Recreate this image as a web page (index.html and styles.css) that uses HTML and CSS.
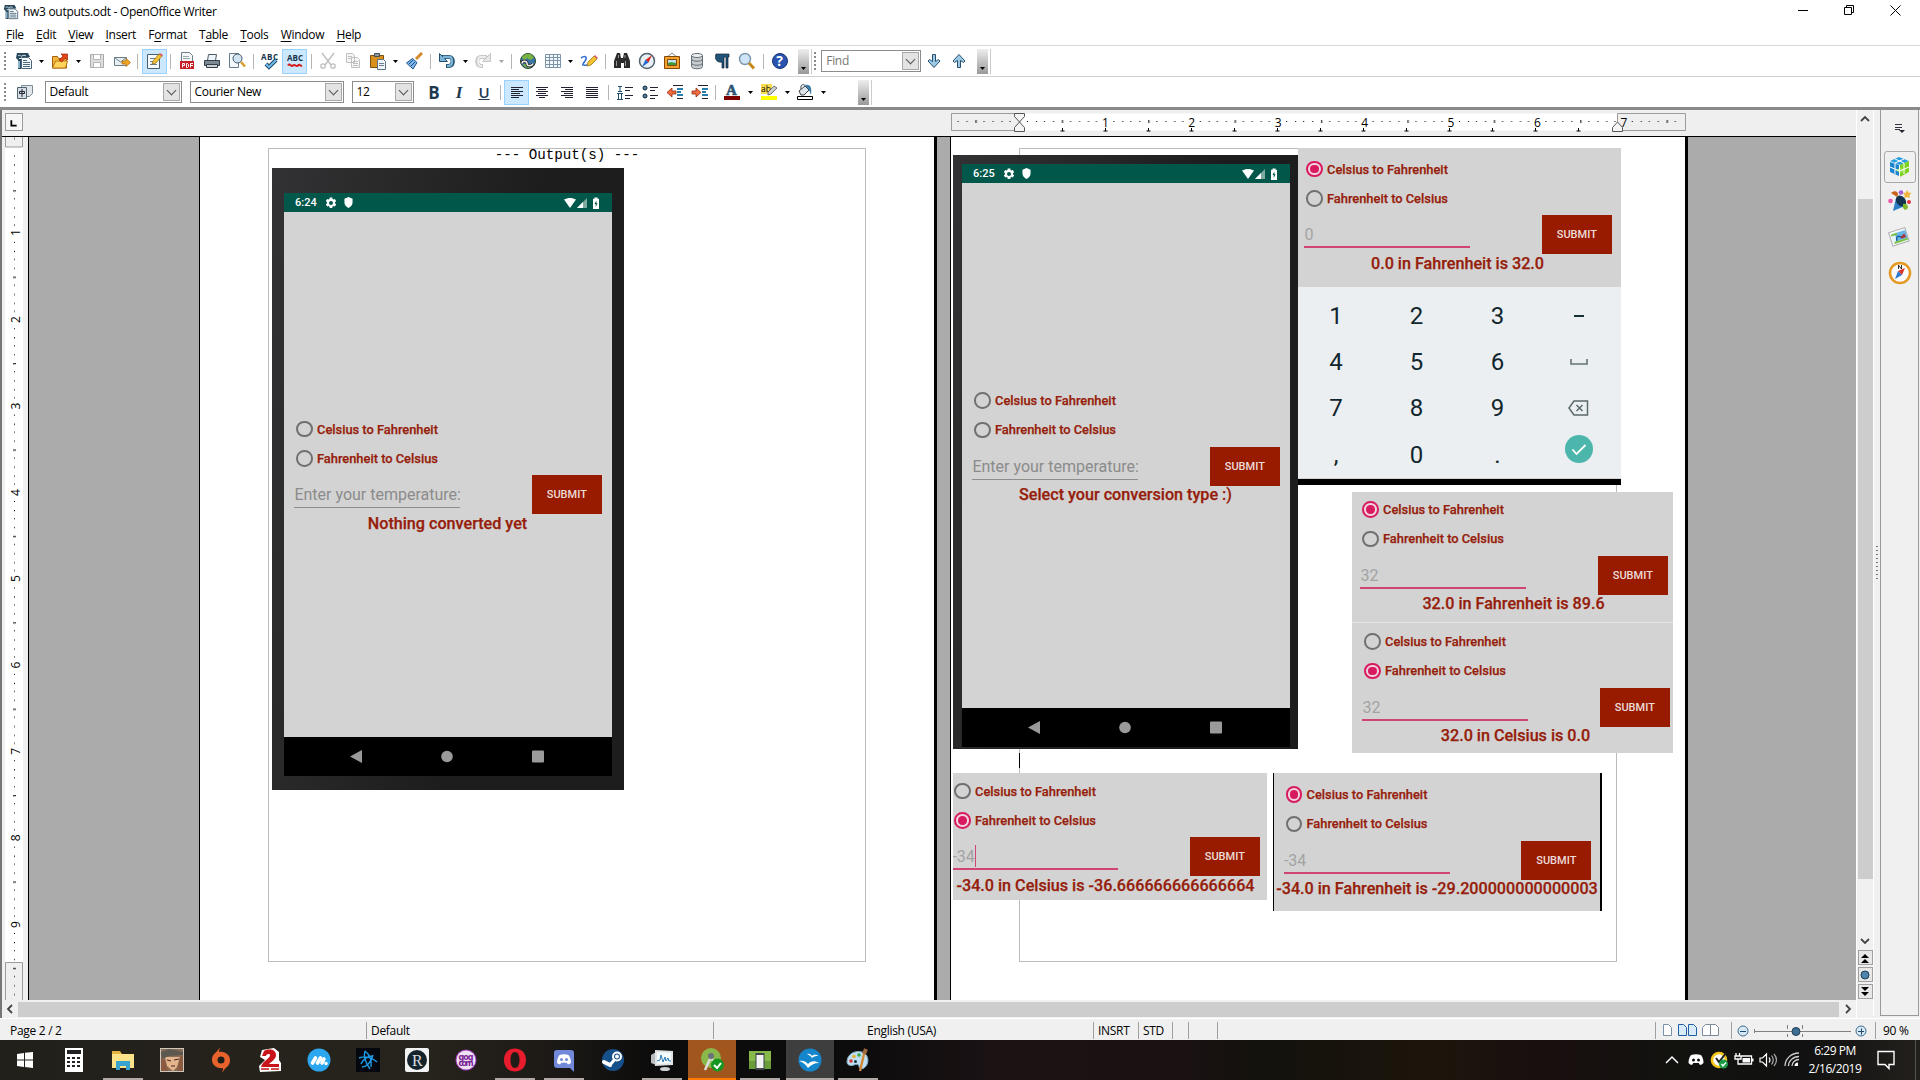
FILE: index.html
```html
<!DOCTYPE html>
<html lang="en">
<head>
<meta charset="utf-8">
<title>hw3 outputs.odt - OpenOffice Writer</title>
<link rel="stylesheet" href="styles.css">
</head>
<body>
<svg class="defs" aria-hidden="true">
  <defs>
    <pattern id="hdots" width="86.4" height="17" patternUnits="userSpaceOnUse" x="68">
      <path d="M8 8h1v1h-1zM17 8h1v1h-1zM25 8h1v1h-1zM34 8h1v1h-1zM43 7h1v3h-1zM51 8h1v1h-1zM60 8h1v1h-1zM69 8h1v1h-1zM77 8h1v1h-1z"/>
    </pattern>
    <pattern id="vdots" width="18" height="86.4" patternUnits="userSpaceOnUse" y="10.5">
      <path d="M9 8h1v1h-1zM9 17h1v1h-1zM9 25h1v1h-1zM9 34h1v1h-1zM8 43h3v1h-3zM9 51h1v1h-1zM9 60h1v1h-1zM9 69h1v1h-1zM9 77h1v1h-1z"/>
    </pattern>
    <symbol id="caret" viewBox="0 0 5 3"><path d="M0 0h5L2.500 3z"/></symbol>
    <symbol id="gear" viewBox="0 0 24 24"><path fill="#fff" fill-rule="evenodd" d="M9.500 1h5l.6 3.200 1.700 1 3-1.100 2.500 4.300-2.400 2.100v2l2.400 2.100-2.500 4.300-3-1.100-1.700 1-.6 3.200h-5l-.6-3.200-1.700-1-3 1.100-2.500-4.300 2.400-2.100v-2L1.700 8.400l2.500-4.300 3 1.100 1.700-1zM12 8a4 4 0 100 8 4 4 0 000-8z"/></symbol>
    <symbol id="shield" viewBox="0 0 10 12"><path fill="#fff" d="M5 0l4.500 1.800V6c0 3-2 5-4.500 6C2.500 11 .5 9 .5 6V1.800z"/></symbol>
    <symbol id="signals" viewBox="0 0 36 12"><path fill="#fff" d="M0 2.500C3.500.4 8.500.4 12 2.500L6 11z"/><path fill="#7faaa1" d="M23 1v10H13z"/><path fill="#fff" d="M19 5v6h-6z"/><path fill="#fff" d="M29 1.800h1.500V.5h3v1.300H35V12h-6z"/><path fill="#01574a" d="M32.400 3.500L30.500 7h1.200v3l1.900-3.700h-1.200z"/></symbol>
    <symbol id="doc" viewBox="0 0 18 18"><path fill="#f4f8fa" stroke="#4d6478" d="M6.500 5.500h7l3 3v8h-10z"/><path fill="#27465a" d="M2 1h11l2 4H6v12H3V8L1 6z"/><path stroke="#d5e6f0" d="M3 4c2-2 3 1 4 0s3-1 4 0M4 6.500h4" fill="none"/><path stroke="#4b6a7e" d="M8 8.500h4M8 10.500h7M8 12.500h7M8 14.500h7"/><path fill="#8fb4cb" d="M3 9h2v7H3z"/></symbol>
  </defs>
</svg>

<header class="titlebar">
  <svg class="app-icon" width="16" height="18"><use href="#doc"/></svg>
  <span class="title ui">hw3 outputs.odt - OpenOffice Writer</span>
  <div class="window-buttons">
    <svg viewBox="0 0 11 11"><path d="M0 5.500h10" stroke="#000"/></svg>
    <svg viewBox="0 0 11 11"><path d="M.5 2.500h7v7h-7zM2.500 2V.5h7v7H8" fill="none" stroke="#000"/></svg>
    <svg viewBox="0 0 11 11"><path d="M.5.5l10 10M10.500.5l-10 10" stroke="#000"/></svg>
  </div>
</header>

<nav class="menubar ui">
  <span><u>F</u>ile</span><span><u>E</u>dit</span><span><u>V</u>iew</span><span><u>I</u>nsert</span><span>F<u>o</u>rmat</span><span>T<u>a</u>ble</span><span><u>T</u>ools</span><span><u>W</u>indow</span><span><u>H</u>elp</span>
</nav>

<div class="toolbar">
  <i class="grip"></i>
  <b class="tool"><svg viewBox="0 0 18 18"><use href="#doc"/></svg></b><b class="drop"><svg><use href="#caret"/></svg></b>
  <b class="tool"><svg viewBox="0 0 18 18"><path fill="#f5b93a" stroke="#a45f10" d="M1.500 16V4.500h5l1 2h8V16z"/><path fill="#ffd45c" stroke="#b87412" d="M1.500 16l3-7h12l-2 7z"/><path fill="#e2461b" stroke="#9b2708" stroke-width=".7" d="M8 8l4-4-2-2h6.500v6l-2-2-4 4z"/></svg></b><b class="drop"><svg><use href="#caret"/></svg></b>
  <b class="tool"><svg viewBox="0 0 18 18"><path fill="#ddd" stroke="#aaa" d="M2.500 2.500h13v13h-13z"/><path fill="#fff" stroke="#b5b5b5" d="M5.500 2.500h7v5h-7zM5.500 10.500h7v5h-7z"/></svg></b>
  <b class="tool"><svg viewBox="0 0 18 18"><path fill="#e9eef2" stroke="#6c7f8d" d="M1.500 5.500h12v8h-12z"/><path fill="none" stroke="#6c7f8d" d="M1.500 5.500l6 4.500 6-4.500"/><path fill="#f5a623" stroke="#b06c08" stroke-width=".8" d="M9 9h4V6.500l4.500 4-4.500 4V12H9z"/></svg></b>
  <i class="sep"></i>
  <b class="tool on"><svg viewBox="0 0 18 18"><path fill="#f7fafc" stroke="#465e70" d="M2.500 2.500h12v14h-12z"/><path stroke="#6a7f8e" d="M5 6.500h6M5 9.500h4M5 12.500h7"/><path fill="#f2c230" stroke="#8d6b17" stroke-width=".7" d="M7 12l1-3 6-7 3 2-6 7z"/><path fill="#e0596d" d="M14 2l1-1 3 2-1 1.500z"/></svg></b>
  <i class="sep"></i>
  <b class="tool"><svg viewBox="0 0 18 18"><path fill="#f4f6f8" stroke="#6f7d88" d="M3.500.5h8l3 3v12h-11z"/><path fill="#c62127" d="M2 9h14v8H2z"/><path stroke="#9aa" d="M5 4.500h6M5 6.500h7"/><path fill="none" stroke="#fff" d="M4.500 15.500v-4h2v2h-2M8.500 11.500v4h1l1-1v-2l-1-1zM12.500 15.500v-4h2.500M12.500 13.500H15"/></svg></b>
  <b class="tool"><svg viewBox="0 0 18 18"><path fill="#eef4f8" stroke="#4a5a66" d="M5.500 2.500h8l-1 6h-8z"/><path fill="#7d8a94" stroke="#333f48" d="M1.500 8.500h15v5h-15z"/><path fill="#c9d1d6" stroke="#333f48" d="M3.500 12.500h11v3h-11z"/></svg></b>
  <b class="tool"><svg viewBox="0 0 18 18"><path fill="#f4f8fa" stroke="#667a88" d="M1.500 1.500h9v14h-9z"/><circle cx="9.500" cy="6.500" r="4.500" fill="#cfe3f0" stroke="#3e5567"/><path stroke="#d99c28" stroke-width="2.500" d="M13 10l4 4.500"/></svg></b>
  <i class="sep"></i>
  <b class="tool"><svg viewBox="0 0 18 18"><text class="abc" x="0" y="8" textLength="17">ABC</text><path fill="none" stroke="#17415e" stroke-width="4" d="M5 12l3 3 7-7"/><path fill="none" stroke="#6fb9ea" stroke-width="2.200" d="M5 12l3 3 7-7"/></svg></b>
  <b class="tool on"><svg viewBox="0 0 18 18"><text class="abc" x="1" y="9" textLength="16">ABC</text><path fill="none" stroke="#d61a1a" stroke-width="2" d="M2 13.500c2-3 3 2 5 0s3 2 5 0 2 1 4 0"/></svg></b>
  <i class="sep"></i>
  <b class="tool"><svg viewBox="0 0 18 18"><g fill="none" stroke="#bdbdbd" stroke-width="1.300"><path d="M3 1l9 12M15 1L6 13"/><circle cx="4" cy="14" r="2.200"/><circle cx="14" cy="14" r="2.200"/></g></svg></b>
  <b class="tool"><svg viewBox="0 0 18 18"><g fill="#f5f5f5" stroke="#c0c0c0"><path d="M2.500 1.500h6l2 2v7h-8zM7.500 5.500h6l2 2v8h-8z"/><path d="M4 4.500h4M4 6.500h3M9 9.500h5M9 11.500h5M9 13.500h5"/></g></svg></b>
  <b class="tool"><svg viewBox="0 0 18 18"><path fill="#d8901f" stroke="#7d4e0d" d="M1.500 3.500h13v12h-13z"/><path fill="#8e9aa3" stroke="#444e55" d="M5.500 1.500h5v3h-5z"/><path fill="#eef4f8" stroke="#5d7180" d="M8.500 7.500h6l2 2v8h-8z"/><path stroke="#6b7f8d" d="M10 11.500h5M10 13.500h5"/></svg></b><b class="drop"><svg><use href="#caret"/></svg></b>
  <b class="tool"><svg viewBox="0 0 18 18"><path stroke="#d4892a" stroke-width="3" d="M11 7l6-6"/><path fill="#7db7e8" stroke="#1e4f90" d="M1.500 11l6-4.500 4.500 4-4 6.500z"/><path stroke="#1e4f90" d="M4 12l4-4M6 14l4-4"/></svg></b>
  <i class="sep"></i>
  <b class="tool"><svg viewBox="0 0 18 18"><path fill="none" stroke="#235170" stroke-width="4.200" d="M4 5h7c5 0 5 8 0 9H8"/><path fill="#7db4d6" stroke="#235170" d="M1.500 1.500v8h8z"/><path fill="none" stroke="#7db4d6" stroke-width="2.400" d="M5 5h6c4 0 4 8 0 9H9"/></svg></b><b class="drop"><svg><use href="#caret"/></svg></b>
  <b class="tool"><svg viewBox="0 0 18 18"><path fill="none" stroke="#c6c6c6" stroke-width="4" d="M13 5H7c-5 0-5 8 0 9h2"/><path fill="#e6e6e6" stroke="#c6c6c6" d="M16.500 1.500v8h-8z"/><path fill="none" stroke="#eee" stroke-width="2" d="M12 5H7c-4 0-4 8 0 9h1"/></svg></b><b class="drop dim"><svg><use href="#caret"/></svg></b>
  <i class="sep"></i>
  <b class="tool"><svg viewBox="0 0 18 18"><circle cx="9" cy="9" r="7.500" fill="#3b74a8" stroke="#264a28"/><path fill="#7bb342" d="M3 5c3-4 6-3 9-3l3 4-4 2-3-2-3 3zM4 12h9l-3 4-4-1z"/><path fill="none" stroke="#222" stroke-width="3" d="M3 11.500c0-3 5-3 5 0s5 3 6 0"/><path fill="none" stroke="#eee" stroke-width="1.500" d="M3 11.500c0-3 5-3 5 0s5 3 6 0"/></svg></b>
  <b class="tool"><svg viewBox="0 0 18 18"><path fill="#f2f7fb" stroke="#7d94a8" d="M1.500 2.500h15v13h-15zM1.500 5.500h15M1.500 8.500h15M1.500 12.500h15M5.500 2.500v13M9.500 2.500v13M13.500 2.500v13"/></svg></b><b class="drop"><svg><use href="#caret"/></svg></b>
  <b class="tool"><svg viewBox="0 0 18 18"><path fill="none" stroke="#3170d0" stroke-width="1.600" d="M1 6c4-3 7-1 4 3s-4 5 3 4"/><path fill="#f2c230" stroke="#8d6b17" stroke-width=".7" d="M7 14l1-4 6-6 3 3-6 6z"/><path fill="#e0596d" d="M14 4l1-1 3 3-1 1z"/></svg></b>
  <i class="sep"></i>
  <b class="tool"><svg viewBox="0 0 18 18"><path fill="#2b2b2b" d="M4 1h3l1 5h2l1-5h3l3 8v7h-6v-5H8v5H1V9z"/><path stroke="#999" d="M3.500 9v5M12.500 9v5M5.500 3v3M12 3v3"/></svg></b>
  <b class="tool"><svg viewBox="0 0 18 18"><circle cx="9" cy="9" r="7.500" fill="#e8f0f6" stroke="#50606c" stroke-width="1.500"/><path fill="#d8261c" d="M14 3l-3.500 7.500L7.500 8z"/><path fill="#2a6ad0" d="M4 15l3.500-7.500 3 3z"/></svg></b>
  <b class="tool"><svg viewBox="0 0 18 18"><path fill="none" stroke="#888" d="M4 5l5-4 5 4"/><path fill="#f1a32c" stroke="#83460b" d="M1.500 4.500h15v12h-15z"/><path fill="#bfe2f5" stroke="#83460b" d="M4.500 7.500h9v6h-9z"/><path fill="#3d9c3a" d="M5 11l3-1 5 1v2H5z"/></svg></b>
  <b class="tool"><svg viewBox="0 0 18 18"><path fill="#c9ced2" stroke="#666f76" d="M3.500 3.500v11c0 3 11 3 11 0v-11"/><ellipse cx="9" cy="3.500" rx="5.500" ry="2" fill="#eef1f3" stroke="#666f76"/><path fill="none" stroke="#666f76" d="M3.500 7c0 3 11 3 11 0M3.500 11c0 3 11 3 11 0"/></svg></b>
  <b class="tool"><svg viewBox="0 0 18 18"><path fill="#1f5478" stroke="#123" stroke-width=".7" d="M3 2h13v3h-1v11h-2V5h-2v11H9v-6C5 11 1 8 3 2z"/></svg></b>
  <b class="tool"><svg viewBox="0 0 18 18"><circle cx="7" cy="7" r="5.500" fill="#cfe5f5" stroke="#7c95ab" stroke-width="1.400"/><path stroke="#c58a1e" stroke-width="3" d="M11 11l5 5.500"/></svg></b>
  <i class="sep"></i>
  <b class="tool"><svg viewBox="0 0 18 18"><circle cx="9" cy="9" r="7.500" fill="#2854b0" stroke="#1a3477"/><text class="qm" x="5.200" y="14">?</text></svg></b>
  <span class="overflow"><svg><use href="#caret"/></svg></span>
  <i class="grip"></i>
  <span class="combo find ui"><em>Find</em><i></i></span>
  <b class="tool"><svg viewBox="0 0 18 18"><path fill="#9cc8e6" stroke="#28506e" d="M7.500 2.500h3v7l3-2 1.500 1.500L9 15.500 3 9l1.500-1.500 3 2z"/></svg></b>
  <b class="tool"><svg viewBox="0 0 18 18"><path fill="#9cc8e6" stroke="#28506e" d="M7.500 15.500h3v-7l3 2L15 9 9 2.500 3 9l1.500 1.500 3-2z"/></svg></b>
  <span class="overflow second"><svg><use href="#caret"/></svg></span>
</div>

<div class="toolbar format">
  <i class="grip"></i>
  <b class="tool"><svg viewBox="0 0 18 18"><path fill="#dfe6eb" stroke="#7b8c98" d="M5.500 2.500h11v8l-3 3h-8z"/><path fill="#d5dee4" stroke="#52656f" d="M1.500 4.500h9v11h-9z"/><path fill="none" stroke="#223" d="M3.500 8.500h5v2h-5zM6 6v8"/></svg></b>
  <span class="combo style ui"><em>Default</em><i></i></span>
  <span class="combo face ui"><em>Courier New</em><i></i></span>
  <span class="combo size ui"><em>12</em><i></i></span>
  <b class="tool glyph bold">B</b><b class="tool glyph italic">I</b><b class="tool glyph under">U</b>
  <i class="sep"></i>
  <b class="tool on"><svg viewBox="0 0 18 18"><path stroke="#223" d="M3 4.500h12M3 6.500h8M3 8.500h12M3 10.500h9M3 12.500h12M3 14.500h8"/></svg></b>
  <b class="tool"><svg viewBox="0 0 18 18"><path stroke="#223" d="M3 4.500h12M5 6.500h8M3 8.500h12M5 10.500h8M3 12.500h12M6 14.500h6"/></svg></b>
  <b class="tool"><svg viewBox="0 0 18 18"><path stroke="#223" d="M3 4.500h12M7 6.500h8M3 8.500h12M6 10.500h9M3 12.500h12M7 14.500h8"/></svg></b>
  <b class="tool"><svg viewBox="0 0 18 18"><path stroke="#223" d="M3 4.500h12M3 6.500h12M3 8.500h12M3 10.500h12M3 12.500h12M3 14.500h12"/></svg></b>
  <i class="sep"></i>
  <b class="tool"><svg viewBox="0 0 18 18"><path stroke="#234f6d" d="M2 3.500h4M4 3v5M2 8.500h4M1 10.500h6M2.500 11v5M5.500 11v5M1 16.500h6"/><path stroke="#223" d="M9 4.500h8M9 7.500h5M9 12.500h8M9 15.500h5"/></svg></b>
  <b class="tool"><svg viewBox="0 0 18 18"><circle cx="4" cy="5" r="2" fill="#4d81a6" stroke="#123"/><circle cx="4" cy="13" r="2" fill="#4d81a6" stroke="#123"/><path stroke="#223" d="M9 4.500h8M9 7.500h5M9 12.500h8M9 15.500h5"/></svg></b>
  <b class="tool"><svg viewBox="0 0 18 18"><path fill="#ef6a3c" stroke="#952c10" stroke-width=".8" d="M1 9.500L6 5v3h4v3H6v3z"/><path stroke="#223" d="M7 2.500h10M11 15.500h6"/><path stroke="#2d7dab" stroke-width="2" d="M11 6h6M11 9h4M11 12h6"/></svg></b>
  <b class="tool"><svg viewBox="0 0 18 18"><path fill="#ef6a3c" stroke="#952c10" stroke-width=".8" d="M10 9.500L5 5v3H1v3h4v3z"/><path stroke="#223" d="M7 2.500h10M11 15.500h6"/><path stroke="#2d7dab" stroke-width="2" d="M11 6h6M11 9h4M11 12h6"/></svg></b>
  <i class="sep"></i>
  <b class="tool"><svg viewBox="0 0 18 18"><text class="fonta" x="3" y="12">A</text><path fill="#7e0000" d="M1 13h16v4H1z"/></svg></b><b class="drop"><svg><use href="#caret"/></svg></b>
  <b class="tool"><svg viewBox="0 0 18 18"><path fill="#f8dc52" d="M1 1h11v10H1z"/><text class="ab" x="1" y="9">ab</text><path fill="#c9ccd0" stroke="#555" stroke-width=".8" d="M8 12V9l6-6 3 2-6 6z"/><path fill="#ff0" d="M1 13h16v4H1z"/></svg></b><b class="drop"><svg><use href="#caret"/></svg></b>
  <b class="tool"><svg viewBox="0 0 18 18"><path fill="#dfe5e9" stroke="#333f48" d="M3 8l6-5 4 4-5 5H5z"/><path fill="none" stroke="#333f48" d="M5 6c-1-6 4-5 5-2"/><path fill="#3d7ba8" d="M9 2c6-1 7 3 6 10l-2-5z"/><path fill="#fff" stroke="#000" d="M1.500 13.500h15v3h-15z"/></svg></b><b class="drop"><svg><use href="#caret"/></svg></b>
  <span class="overflow"><svg><use href="#caret"/></svg></span>
</div>

<main class="workspace">
  <section class="editor">
    <div class="hruler-row">
      <span class="tab-kind"><svg viewBox="0 0 18 18"><path d="M6 7v6h6" fill="none" stroke="#000" stroke-width="2"/></svg></span>
      <svg class="hruler" width="735" height="20" viewBox="0 0 735 20">
        <path fill="#fff" d="M68 .5h598v17H68z"/>
        <path fill="#efefef" stroke="#9b9b9b" d="M.5.5h68v17H.5zM666.500.5h68v17h-68z"/>
        <path fill="url(#hdots)" d="M4 0h728v17H4z"/>
        <g class="ruler-num"><text x="154.400" y="13.500">1</text><text x="240.800" y="13.500">2</text><text x="327.200" y="13.500">3</text><text x="413.600" y="13.500">4</text><text x="500" y="13.500">5</text><text x="586.400" y="13.500">6</text><text x="673" y="13.500">7</text></g>
        <path stroke="#000" fill="none" d="M109.500 18h4M111.500 15v3M152.500 18h4M154.500 15v3M195.500 18h4M197.500 15v3M238.500 18h4M240.500 15v3M281.500 18h4M283.500 15v3M324.500 18h4M326.500 15v3M367.500 18h4M369.500 15v3M410.500 18h4M412.500 15v3M453.500 18h4M455.500 15v3M496.500 18h4M498.500 15v3M539.500 18h4M541.500 15v3M582.500 18h4M584.500 15v3M625.500 18h4M627.500 15v3"/>
        <path fill="#f4f4f4" stroke="#555" d="M63.500.5h10v3l-5 5.500-5-5.500zM63.500 18.500v-4l5-5.500 5 5.500v4zM661.500 18.500v-4l5-5.500 5 5.500v4z"/>
      </svg>
    </div>
    <div class="doc-row">
      <svg class="vruler" width="19" height="864" viewBox="0 0 19 864">
        <path fill="#fff" d="M0 10h18v815H0z"/>
        <path fill="#efefef" stroke="#9b9b9b" d="M.5-1v11h17V-1M.5 865V825.500h17V865"/>
        <path fill="url(#vdots)" d="M0 0h18v864H0z"/>
        <g class="ruler-num"><text transform="translate(15 95.500) rotate(-90)">1</text><text transform="translate(15 182.500) rotate(-90)">2</text><text transform="translate(15 269) rotate(-90)">3</text><text transform="translate(15 355.500) rotate(-90)">4</text><text transform="translate(15 441.500) rotate(-90)">5</text><text transform="translate(15 528) rotate(-90)">6</text><text transform="translate(15 614.300) rotate(-90)">7</text><text transform="translate(15 700.700) rotate(-90)">8</text><text transform="translate(15 787.500) rotate(-90)">9</text></g>
      </svg>
      <div class="canvas">
        <article class="page">
          <div class="bounds"><p class="heading">--- Output(s) ---</p></div>
          <figure class="shot phone shot-a">
            <div class="screen">
              <div class="statusbar"><span class="time">6:24</span><svg class="g"><use href="#gear"/></svg><svg class="s"><use href="#shield"/></svg><svg class="sig"><use href="#signals"/></svg></div>
              <div class="form">
                <label class="opt"><i></i><span>Celsius to Fahrenheit</span></label>
                <label class="opt"><i></i><span>Fahrenheit to Celsius</span></label>
                <div class="entry"><span class="field hint">Enter your temperature:</span><button>SUBMIT</button></div>
                <p class="result">Nothing converted yet</p>
              </div>
              <div class="navbar"><svg viewBox="0 0 12 13"><path d="M12 0v13L0 6.500z"/></svg><svg viewBox="0 0 12 12"><circle cx="6" cy="6" r="5.800"/></svg><svg viewBox="0 0 12 12"><rect width="12" height="12" rx="1"/></svg></div>
            </div>
          </figure>
        </article>
        <article class="page">
          <div class="bounds"><i class="text-caret"></i></div>
          <figure class="shot phone shot-b">
            <div class="screen">
              <div class="statusbar"><span class="time">6:25</span><svg class="g"><use href="#gear"/></svg><svg class="s"><use href="#shield"/></svg><svg class="sig"><use href="#signals"/></svg></div>
              <div class="form">
                <label class="opt"><i></i><span>Celsius to Fahrenheit</span></label>
                <label class="opt"><i></i><span>Fahrenheit to Celsius</span></label>
                <div class="entry"><span class="field hint">Enter your temperature:</span><button>SUBMIT</button></div>
                <p class="result">Select your conversion type :)</p>
              </div>
              <div class="navbar"><svg viewBox="0 0 12 13"><path d="M12 0v13L0 6.500z"/></svg><svg viewBox="0 0 12 12"><circle cx="6" cy="6" r="5.800"/></svg><svg viewBox="0 0 12 12"><rect width="12" height="12" rx="1"/></svg></div>
            </div>
          </figure>
          <figure class="shot shot-c">
            <div class="form">
              <label class="opt sel"><i></i><span>Celsius to Fahrenheit</span></label>
              <label class="opt"><i></i><span>Fahrenheit to Celsius</span></label>
              <div class="entry"><span class="field">0</span><button>SUBMIT</button></div>
              <p class="result">0.0 in Fahrenheit is 32.0</p>
            </div>
            <div class="keypad">
              <span>1</span><span>2</span><span>3</span><span><svg width="10" height="2"><path fill="#163038" d="M0 0h10v2H0z"/></svg></span>
              <span>4</span><span>5</span><span>6</span><span><svg width="18" height="6"><path fill="none" stroke="#667378" stroke-width="1.600" d="M1 0v5h16V0"/></svg></span>
              <span>7</span><span>8</span><span>9</span><span><svg width="21" height="16"><path fill="none" stroke="#5b686d" stroke-width="1.500" d="M6 1h13.500v14H6L1 8zM8.500 5l6 6M14.500 5l-6 6"/></svg></span>
              <span>,</span><span>0</span><span>.</span><span><svg class="ok" width="28" height="28"><circle cx="14" cy="14" r="14" fill="#4db6ac"/><path fill="none" stroke="#fff" stroke-width="1.800" d="M7.500 14.500l4 4.500 9-9"/></svg></span>
            </div>
          </figure>
          <figure class="shot shot-d">
            <div class="form">
              <label class="opt sel"><i></i><span>Celsius to Fahrenheit</span></label>
              <label class="opt"><i></i><span>Fahrenheit to Celsius</span></label>
              <div class="entry"><span class="field">32</span><button>SUBMIT</button></div>
              <p class="result">32.0 in Fahrenheit is 89.6</p>
            </div>
          </figure>
          <figure class="shot shot-e">
            <div class="form">
              <label class="opt"><i></i><span>Celsius to Fahrenheit</span></label>
              <label class="opt sel"><i></i><span>Fahrenheit to Celsius</span></label>
              <div class="entry"><span class="field">32</span><button>SUBMIT</button></div>
              <p class="result">32.0 in Celsius is 0.0</p>
            </div>
          </figure>
          <figure class="shot shot-f">
            <div class="form">
              <label class="opt"><i></i><span>Celsius to Fahrenheit</span></label>
              <label class="opt sel"><i></i><span>Fahrenheit to Celsius</span></label>
              <div class="entry"><span class="field"><span class="typed">-34</span></span><button>SUBMIT</button></div>
              <p class="result">-34.0 in Celsius is -36.666666666666664</p>
            </div>
          </figure>
          <figure class="shot shot-g">
            <div class="form">
              <label class="opt sel"><i></i><span>Celsius to Fahrenheit</span></label>
              <label class="opt"><i></i><span>Fahrenheit to Celsius</span></label>
              <div class="entry"><span class="field">-34</span><button>SUBMIT</button></div>
              <p class="result">-34.0 in Fahrenheit is -29.200000000000003</p>
            </div>
          </figure>
        </article>
      </div>
    </div>
    <div class="hscroll"><svg viewBox="0 0 8 10"><path d="M6 1L2 5l4 4"/></svg><i></i><svg viewBox="0 0 8 10"><path d="M2 1l4 4-4 4"/></svg></div>
  </section>
  <div class="vscroll">
    <svg class="arrow" viewBox="0 0 10 8"><path d="M1 6l4-4 4 4"/></svg>
    <div class="track"><i></i></div>
    <svg class="arrow" viewBox="0 0 10 8"><path d="M1 2l4 4 4-4"/></svg>
    <b><svg viewBox="0 0 10 10"><path d="M1 5l4-4 4 4zM1 10l4-4 4 4z"/></svg></b>
    <b><svg viewBox="0 0 10 10"><circle cx="5" cy="5" r="4" fill="#4f86ad" stroke="#1b3c55"/></svg></b>
    <b><svg viewBox="0 0 10 10"><path d="M1 0l4 4 4-4zM1 5l4 4 4-4z"/></svg></b>
  </div>
  <div class="splitter"><i></i></div>
  <aside class="sidebar">
    <svg class="deck-menu" width="10" height="10"><path stroke="#334" d="M0 .5h7M0 3.500h7M0 5.500h5"/><path d="M4 6h6L7 9z" fill="#223"/></svg>
    <b class="deck active"><svg viewBox="0 0 24 24"><path fill="#2a9fe0" d="M2 6l9-4 10 4-9 4z"/><path fill="#1b86cf" d="M2 7l9 3v11l-9-4z"/><path fill="#7ed321" d="M12 10l9-4v11l-9 5z"/><path fill="#9be04a" d="M7 15l6-2 5 2-5 3z"/><path stroke="#fff" fill="none" d="M2 12l9.500 4 9.500-4M7 4l9 4v11M16 4L7 8v11M11.500 10v12"/></svg></b>
    <b class="deck"><svg viewBox="0 0 24 24"><path fill="#2c7fc4" d="M5 21l3-13 9 8z"/><ellipse cx="13" cy="11" rx="4.500" ry="6" transform="rotate(-40 13 11)" fill="#12344f"/><path fill="#c8651b" d="M3 3c4-4 9-1 6 4L6 5z"/><path fill="#7db928" d="M15 14c5-2 7 5 2 6l-2-2z"/><circle cx="13" cy="2.500" r="2.300" fill="#a45fd6"/><path fill="#f2b53c" d="M19 0l1.500 2.500 3 .5-2 2.300.3 3L19 7l-2.500 1.300V5L15 3l3-.5z"/><circle cx="2.500" cy="11" r="2.300" fill="#ea5aa8"/><circle cx="21" cy="12" r="2" fill="#e0353c"/></svg></b>
    <b class="deck"><svg viewBox="0 0 24 24"><g transform="rotate(-18 12 12)"><path fill="#fff" stroke="#aaa" d="M2.500 4.500h17v14h-17z"/><path fill="#e3f3fc" d="M4 6h14v11H4z"/><path fill="#67b3e6" d="M8 7h11v8H8z"/><path fill="#7cc142" d="M4 7h6v2H4zM5 15h14v2H5z"/><path fill="none" stroke="#1b5f9e" stroke-width="1.500" d="M8 15c0-6 4-5 6-1"/><path fill="#a33" d="M13 12l4-2 1 4h-5z"/></g></svg></b>
    <b class="deck"><svg viewBox="0 0 24 24"><circle cx="12" cy="12" r="10" fill="#fbfbfb" stroke="#e49a24" stroke-width="2.600"/><path fill="#d9342b" d="M17 7l-3 7-4-4z"/><path fill="#3079cf" d="M7 18l3-8 4 4z"/><path fill="none" stroke="#333" d="M10.500 8V4l3 4V4"/></svg></b>
  </aside>
</main>

<footer class="status ui">
  <span class="c-page"><em>Page 2 / 2</em></span><span class="c-style"><em>Default</em></span><span class="c-lang"><em>English (USA)</em></span><span class="c-ins"><em>INSRT</em></span><span class="c-std"><em>STD</em></span><span class="c-a"></span><span class="c-b"></span><span class="c-rest"></span>
  <span class="c-views">
    <svg width="10" height="13"><path fill="#fff" stroke="#7a93aa" d="M.5.5h5l3 3v8h-8z"/></svg>
    <svg width="19" height="13"><path fill="#d9eafa" stroke="#1f5fa8" d="M.5.5h5l3 3v8h-8zM10.500.5h5l3 3v8h-8z"/></svg>
    <svg width="18" height="13"><path fill="#fff" stroke="#7a8a98" d="M3.500.5h5v11h-8v-8zM8.500.5h5l3 3v8h-8z"/></svg>
  </span>
  <span class="c-zoom"><svg width="130" height="16"><circle cx="11" cy="8" r="5" fill="#d6e8f5" stroke="#3f6d90"/><path stroke="#1d4a6d" d="M8 8.500h6"/><path stroke="#808080" d="M22.500 6v4M22 8.500h97M55.500 2v4M70.500 2v4M55.500 11v3M70.500 11v3"/><circle cx="64" cy="8.500" r="4" fill="#3d6d91" stroke="#1f3d55"/><circle cx="129" cy="8" r="5" fill="#d6e8f5" stroke="#3f6d90"/><path stroke="#1d4a6d" d="M126 8.500h6M129.500 5.500v6"/></svg></span>
  <span class="c-pct"><em>90 %</em></span>
</footer>

<div class="taskbar">
  <b><svg viewBox="0 0 24 24"><path fill="#fff" d="M4 6l7-1v6.500H4zM12 4.800L20 4v7.500h-8zM4 12.500h7V19l-7-1zM12 12.500h8V20l-8-1z"/></svg></b>
  <b><svg viewBox="0 0 24 24"><path fill="#fff" d="M3 0h18v24H3z"/><path fill="#222" d="M5 2h14v4H5zM5 9h3v2H5zM10 9h3v2h-3zM15 9h3v2h-3zM5 13h3v2H5zM10 13h3v2h-3zM15 13h3v2h-3zM5 17h3v2H5zM10 17h3v2h-3zM15 17h3v2h-3z"/></svg></b>
  <b class="run wide"><svg viewBox="0 0 24 24"><path fill="#e3b341" d="M1 3h8l2 3h12v14H1z"/><path fill="#fce38a" d="M1 6h22v14H1z"/><path fill="#38a3cf" d="M5 13h14v9h-4v-4H9v4H5z"/></svg></b>
  <b><svg viewBox="0 0 24 24"><path fill="#cfc7bd" d="M0 0h24v24H0z"/><path fill="#8a6d55" d="M1 1h22v22H1z"/><path fill="#e4b58c" d="M5 9h15l-3 10-4 4-6-5z"/><path fill="#5d5850" d="M1 4l8-3 6 1 8 2v3L9 8 2 11z"/><path fill="#8b5a40" d="M1 11l4 1 3 11H1zM20 9l3-1v15h-6z"/><path stroke="#422" d="M7 12l4 1M14 12l5-1M11 18h4"/></svg></b>
  <b><svg viewBox="0 0 24 24"><path fill="#e8622c" d="M11 0c-1 2-1 3-1 4 6-1 11 3 11 8 0 6-4 7-6 10-1 1-1 2-2 2 1-2 1-3 1-4-6 1-11-3-11-8 0-6 4-7 6-10 1-1 1-2 2-2z"/><circle cx="12" cy="12" r="3.500" fill="#1d1d18"/></svg></b>
  <b><svg viewBox="0 0 24 24"><path fill="#fff" d="M4 2l12-2 5 4v8l2 3v8L2 24l-1-6 6-6-5-3z"/><path fill="#c8141b" d="M6 3c6-3 12-1 12 4 0 4-4 6-7 9h10v3H3c2-7 9-8 9-12 0-2-4-1-4 1H4z"/><path stroke="#c8141b" stroke-width="1.500" d="M3 21h8M13 21h8"/></svg></b>
  <b><svg viewBox="0 0 24 24"><circle cx="12" cy="12" r="11.500" fill="#2aa7ee"/><path fill="none" stroke="#fff" stroke-width="3.600" stroke-linecap="round" d="M5.500 15l3-5M10.500 15l3-5M15 15l2-4M19 15.500v0"/></svg></b>
  <b><svg viewBox="0 0 24 24"><path fill="#04080e" d="M0 0h24v24H0z"/><g fill="none" stroke="#1e9be8" stroke-width="1.400"><path d="M9 3c4 3 7 8 6 16M3 10c5-2 12-1 18 4M6 19c4 0 9-4 11-12M9 3c-2 6 0 11 5 18M17 8c-6 0-10 4-12 8"/></g></svg></b>
  <b><svg viewBox="0 0 24 24"><rect width="24" height="24" rx="2" fill="#f3f3f3"/><circle cx="12" cy="12" r="10" fill="#15232b"/><text class="rr" x="7" y="18">R</text></svg></b>
  <b><svg viewBox="0 0 24 24"><circle cx="12" cy="12" r="10.500" fill="#a43fc0"/><circle cx="12" cy="12" r="9.500" fill="#efe3f3"/><text class="gog" x="4.500" y="11.500" textLength="15">gog</text><text class="gog" x="4.500" y="17.500" textLength="15">com</text></svg></b>
  <b class="run"><svg viewBox="0 0 24 24"><path fill="#e81c2c" fill-rule="evenodd" d="M12 .5c7 0 11 5 11 11.500S19 23.500 12 23.500 1 18.500 1 12 5 .5 12 .5zM12 4C9 4 7.500 7.500 7.500 12S9 20 12 20s4.500-3.500 4.500-8S15 4 12 4z"/></svg></b>
  <b class="run"><svg viewBox="0 0 24 24"><path fill="#7289da" d="M5 2h14a3 3 0 013 3v19l-4-4H5a3 3 0 01-3-3V5a3 3 0 013-3z"/><path fill="#fff" fill-rule="evenodd" d="M7.500 7c3-1 6-1 9 0 2 3 2.500 5 2.500 8-2 1.500-3 1.500-3.500 1l-.7-1.200H9.200L8.500 16c-.5.500-1.500.5-3.500-1 0-3 .5-5 2.500-8zM9.500 10a1.500 1.500 0 100 3 1.500 1.500 0 000-3zm5 0a1.500 1.500 0 100 3 1.500 1.500 0 000-3z"/></svg></b>
  <b><svg viewBox="0 0 24 24"><circle cx="12" cy="12" r="11" fill="#15508a"/><circle cx="16" cy="8.500" r="4" fill="#15508a" stroke="#fff" stroke-width="2"/><circle cx="16" cy="8.500" r="2" fill="#fff"/><path stroke="#fff" stroke-width="4" stroke-linecap="round" d="M3 14l6 3"/><path stroke="#fff" stroke-width="3" d="M9 17l5-6"/></svg></b>
  <b class="run"><svg viewBox="0 0 24 24"><path fill="#b7bdc1" d="M1 7l5-3v13l-5-2z"/><path fill="#dfe3e6" d="M5 2l18 1v14l-18 1z"/><path fill="#f6fbfe" d="M7 4l14 1v10l-14 1z"/><path fill="none" stroke="#2a78b5" stroke-width="1" d="M7 13l3-1 1-5 2 7 2-5 1 4 2-3 1 3h2"/><ellipse cx="15" cy="21" rx="5" ry="2" fill="#cdd2d5"/></svg></b>
  <b class="studio"><svg viewBox="0 0 24 24"><circle cx="11" cy="10" r="10" fill="#8bb84a"/><circle cx="11" cy="8" r="3" fill="#6a7178"/><path stroke="#ddd" stroke-width="2.500" d="M10 11L5 22M12 11l5 11"/><circle cx="17.500" cy="17" r="6.500" fill="#16961f"/><path fill="none" stroke="#fff" stroke-width="2" d="M14 17l3 3 4-5"/></svg></b>
  <b class="run"><svg viewBox="0 0 24 24"><path fill="#86b84a" d="M1 3h22v18H1z"/><path fill="#6a9c38" d="M1 13h22v8H1z"/><path fill="#3c4447" d="M7.500 5h9v17h-9z"/><path fill="#f2f2f2" d="M8.500 7h7v13h-7z"/></svg></b>
  <b class="writer run"><svg viewBox="0 0 24 24"><circle cx="12" cy="12" r="11.500" fill="#1585cc"/><path fill="#fff" d="M9 6c3-1 4 1 5 2 1-1 4-2 6 0-3-.5-5 1-6 2-1-2-3-3-5-4zM1 13c5-1 7 1 9 3 2-3 7-4 11-1-5 0-8 2-11 5-2-3-5-6-9-7z"/></svg></b>
  <b class="run"><svg viewBox="0 0 24 24"><path fill="#bfe0f2" stroke="#7fa8bd" d="M1 14C1 6 9 2 16 4s8 12 2 16c-3 2-5 0-5-2s-3-2-5-1-7 1-7-3z"/><circle cx="5" cy="13" r="1.800" fill="#d33"/><circle cx="8" cy="8.500" r="1.800" fill="#e9b22c"/><circle cx="13" cy="7" r="1.800" fill="#3a4"/><circle cx="9.500" cy="13.500" r="1.500" fill="#15333f"/><path stroke="#d48936" stroke-width="2.400" d="M14 23l4-17"/><path stroke="#9c6b3e" stroke-width="4" d="M18 6l2-5"/></svg></b>
  <div class="tray">
    <svg viewBox="0 0 24 24"><path fill="none" stroke="#fff" stroke-width="1.500" d="M6 15l6-6 6 6"/></svg>
    <svg viewBox="0 0 24 24"><path fill="#fff" fill-rule="evenodd" d="M7 7c3-1 7-1 10 0 2 3 2.500 5 2.500 8-2 2-3 2-4 1.500l-.7-1.500H9.200l-.7 1.500c-1 .5-2 .5-4-1.500C4.500 12 5 10 7 7zm2.500 3.500a1.500 1.500 0 100 3 1.500 1.500 0 000-3zm5 0a1.500 1.500 0 100 3 1.500 1.500 0 000-3z"/></svg>
    <svg viewBox="0 0 24 24"><circle cx="11" cy="12" r="7" fill="#fff" stroke="#f5c518" stroke-width="2.600"/><path stroke="#222" stroke-width="2" fill="none" d="M8 10l3 4 7-9"/><circle cx="15.500" cy="16" r="4.500" fill="#1c9b46"/><path fill="none" stroke="#fff" stroke-width="1.300" d="M13.500 16l1.500 2 3-3.500"/></svg>
    <svg viewBox="0 0 24 24"><path fill="none" stroke="#fff" stroke-width="1.300" d="M9 8h10.500v8H8M4 5v3M7.500 5v3M3 8h6v3H3zM6 11v5h3"/><path fill="#fff" d="M10.500 10H18v4.500h-7.500zM20 10.500h1.500v3H20z"/></svg>
    <svg viewBox="0 0 24 24"><path fill="none" stroke="#fff" stroke-width="1.200" d="M4 10h2.500l4-4v12l-4-4H4zM13 9.500q2 2.500 0 5"/><path fill="none" stroke="#aaa" stroke-width="1.200" d="M15.500 7.500q3.500 4.500 0 9M18 6q5 6 0 12"/></svg>
    <svg viewBox="0 0 24 24"><g fill="none" stroke="#ccc" stroke-width="1.300"><path d="M5 18C5 11 11 5 19 5M8.500 18c0-5 4.500-9.500 10.500-9.500M12 18c0-3.500 3-6.500 7-6.500"/></g><path fill="#fff" d="M18 14.500a3.500 3.500 0 00-3.500 3.500H18z"/></svg>
    <div class="clock ui"><span>6:29 PM</span><span>2/16/2019</span></div>
    <svg class="note" viewBox="0 0 24 24"><path fill="none" stroke="#fff" stroke-width="1.400" d="M4 3.500h16v13h-5v4l-4-4H4z"/></svg>
    <i class="peek"></i>
  </div>
</div>
</body>
</html>
```
FILE: styles.css
```css
* { box-sizing: border-box; }
body { margin: 0; width: 1920px; height: 1080px; overflow: hidden; display: flex; flex-direction: column; background: #fff; font-family: "Open Sans", "Noto Sans", sans-serif; color: #000; }
svg { display: block; flex: none; }
figure, p { margin: 0; }
em { font-style: normal; }
.defs { position: absolute; width: 0; height: 0; }
.ui { font: 12px/16px "Open Sans", "Noto Sans", sans-serif; letter-spacing: -.3px; white-space: nowrap; }

.titlebar { height: 24px; display: flex; align-items: center; padding: 0 19px 1px 3px; }
.title { margin-left: 4px; }
.window-buttons { margin-left: auto; display: flex; gap: 35px; align-self: flex-start; padding-top: 5px; }
.window-buttons svg { width: 11px; height: 11px; }
.menubar { height: 22px; display: flex; align-items: center; padding-left: 6px; gap: 12.200px; border-bottom: 1px solid #d7d7d7; }
.menubar u { text-underline-offset: 2px; }

.toolbar { height: 31px; display: flex; align-items: center; border-bottom: 1px solid #d0d0d0; }
.format { height: 30px; border-bottom: 0; }
.grip { width: 2px; height: 18px; margin: 0 5px 0 4px; background: repeating-linear-gradient(#8a8a8a 0 2px, transparent 2px 4px); }
.tool { width: 25px; height: 25px; flex: none; display: flex; align-items: center; justify-content: center; }
.tool svg { width: 18px; height: 18px; }
.tool.on { background: #cce8ff; border: 1px solid #99d1ff; }
.drop { width: 11.500px; flex: none; display: flex; justify-content: center; }
.drop svg, .overflow svg { width: 5px; height: 3px; }
.drop.dim { opacity: .35; }
.sep { width: 1px; height: 15px; margin: 0 3.400px; background: #b5b5b5; flex: none; }
.overflow { width: 11px; height: 25px; margin-left: 6px; background: linear-gradient(#eee, #999); display: flex; align-items: flex-end; justify-content: center; padding-bottom: 4px; box-shadow: 2px 0 0 #fff, 3px 0 0 #ccc; }
.overflow + .grip { margin-left: 5px; }
.combo { height: 22px; display: flex; align-items: center; justify-content: space-between; padding: 0 1px 0 4px; border: 1px solid #8c8c8c; background: #fff; }
.combo > i { width: 17px; height: 18px; border: 1px solid #a8a8a8; background: #e3e3e3; display: flex; align-items: center; justify-content: center; }
.combo > i::before { content: ""; width: 6px; height: 6px; margin-top: -4px; border: solid #555; border-width: 0 1px 1px 0; transform: rotate(45deg); }
.find { width: 100px; color: #777; }
.second { margin-left: 6px; }
.format .grip { margin-right: 6px; }
.style { width: 137px; margin-left: 7.500px; }
.face { width: 154px; margin-left: 8px; }
.size { width: 62px; margin: 0 8px 0 8px; }
.format .overflow { margin-left: 29px; }
.glyph { font: 700 17px/25px "Open Sans", sans-serif; color: #1f3a50; }
.italic { font: italic 700 17px/25px "Liberation Serif", serif; }
.under { font-weight: 600; font-size: 15px; text-decoration: underline; }
.abc { font: 700 8px "Open Sans", sans-serif; fill: #17334a; }
.qm { font: 700 14px "Open Sans", sans-serif; fill: #fff; }
.fonta { font: 700 15px "Liberation Serif", serif; fill: #2b5573; stroke: #2b5573; stroke-width: .6px; }
.ab { font: 8.500px "Open Sans", sans-serif; }

.workspace { height: 911px; display: flex; border-top: 3px solid #8a8a8a; background: #f0f0f0; }
.editor { width: 1856px; display: flex; flex-direction: column; border-left: 2px solid #777; }
.hruler-row { height: 27px; display: flex; background: #efefef; border-bottom: 1px solid #000; padding: 3px 0 0 3px; }
.tab-kind { width: 18px; height: 18px; border: 1px solid #9b9b9b; background: #f6f6f6; }
.tab-kind svg { width: 16px; height: 16px; }
.hruler { margin-left: 928px; }
.ruler-num { font: 12px "Open Sans", sans-serif; text-anchor: middle; }
.doc-row { height: 863px; display: flex; overflow: hidden; }
.vruler { margin: 0 4px 0 3px; }
.canvas { width: 1828px; height: 863px; background: #ababab; border-left: 1px solid #000; display: flex; padding-left: 170px; gap: 13px; }
.page { position: relative; width: 738px; height: 863px; background: #fff; border: solid #000; border-width: 0 3px 0 1px; padding: 11px 0 0 68px; }
.bounds { position: relative; width: 598px; height: 814px; border: 1px solid #bcbcbc; }
.heading { font: 14.200px/13px "Liberation Mono", monospace; text-align: center; white-space: pre; }
.text-caret { position: absolute; left: -1px; top: 604px; width: 1px; height: 15px; background: #000; }

.shot { position: absolute; overflow: hidden; background: #d3d3d3; font-family: Roboto, sans-serif; color: #961d0b; }
.phone { background: linear-gradient(100deg, #323234, #1d1d1d 60%); }
.screen { height: 583px; background: #d3d3d3; display: flex; flex-direction: column; }
.statusbar { height: 19px; flex: none; background: #01574a; display: flex; align-items: center; padding: 0 9px 0 11px; color: #fff; }
.time { font-size: 11px; font-weight: 500; width: 29px; }
.g { width: 12px; height: 12px; margin-left: .5px; }
.s { width: 9px; height: 11px; margin-left: 7.500px; }
.sig { width: 36px; height: 12px; margin-left: auto; margin-right: 3px; }
.navbar { height: 39px; flex: none; margin-top: auto; background: #000; display: flex; align-items: center; justify-content: center; gap: 79px; padding: 0 3px 1px 0; }
.navbar svg { width: 12px; height: 13px; fill: #9a9a9a; }
.form { width: 327px; }
.opt { height: 29.300px; display: flex; align-items: center; padding-left: 12px; font-size: 12.850px; font-weight: 500; white-space: nowrap; }
.opt span, .result { -webkit-text-stroke: .25px currentColor; }
.opt i { width: 16.500px; height: 16.500px; border: 2px solid #707070; border-radius: 50%; margin-right: 4.500px; display: flex; align-items: center; justify-content: center; }
.sel i { border-color: #d81b60; background: #f0d5de; }
.sel i::before { content: ""; width: 8.500px; height: 8.500px; border-radius: 50%; background: #d81b60; }
.entry { height: 39px; margin-top: 2.400px; padding: 0 9.200px 0 10.400px; display: flex; justify-content: space-between; }
.field { width: 166px; height: 33px; border-bottom: 2px solid #d04474; font-size: 16px; line-height: 40px; color: #a3a3a3; white-space: nowrap; overflow: hidden; }
.hint { border-bottom: 1px solid #8d8d8d; color: #8b8b8b; }
.typed { display: inline-block; height: 22px; margin-top: 8px; line-height: 24px; border-right: 1px solid #d04474; vertical-align: top; }
.entry button { width: 70px; height: 39px; border: 0; padding: 0; background: #981b00; color: #eddcd9; font: 500 11px/39px Roboto, sans-serif; }
.result { margin-top: -.8px; text-align: center; font-size: 16.150px; font-weight: 500; line-height: 19px; white-space: nowrap; }
.shot-a { left: 72px; top: 31px; width: 352px; height: 622px; padding: 25px 12px 0; }
.shot-a .form { margin-top: 202.500px; }
.shot-b { left: 2px; top: 18px; width: 345px; height: 594px; padding: 9px 8px 0 9px; }
.shot-b .form { margin-top: 203px; }
.shot-c { left: 347px; top: 11px; width: 323px; height: 337px; border-bottom: 6px solid #000; }
.shot-c .form { margin: 6.500px 0 0 -4px; }
.keypad { margin-top: 14px; height: 191px; background: #ebeff2; padding-top: 6px; display: grid; grid-template-columns: 76px 85px 77px 85px; grid-auto-rows: 46.300px; justify-items: center; align-items: center; font-size: 24px; color: #12262d; }
.ok { margin-top: -12px; }
.shot-d { left: 401px; top: 355px; width: 321px; height: 130px; }
.shot-d .form { margin: 3px 0 0 -2px; }
.shot-e { left: 401px; top: 485px; width: 321px; height: 131px; border-top: 1px solid #e6e6e6; }
.shot-e .form { margin: 4px 0 0; }
.shot-f { left: 2px; top: 636px; width: 314px; height: 127px; }
.shot-f .form { margin: 3.500px 0 0 -11px; }
.shot-g { left: 322px; top: 636px; width: 329px; height: 138px; border: solid #000; border-width: 0 2px 0 1px; }
.shot-g .form { margin: 7px 0 0 -.5px; }

.hscroll { height: 16px; margin-top: 1px; display: flex; align-items: center; justify-content: space-between; padding: 0 4px; }
.hscroll svg { width: 8px; height: 10px; }
.hscroll i { width: 1821px; height: 15px; background: #cdcdcd; margin-left: 4px; margin-right: 5px; }
.hscroll path, .arrow path { fill: none; stroke: #444; stroke-width: 1.800; }
.vscroll { width: 17px; display: flex; flex-direction: column; align-items: center; border-left: 1px solid #fff; padding-top: 3px; }
.arrow { width: 10px; height: 8px; margin: 2px 0; }
.track { height: 808px; padding-top: 74px; margin-bottom: 2px; }
.track i { display: block; width: 15px; height: 680px; background: #cdcdcd; }
.vscroll b { width: 15px; height: 15px; margin-top: 2px; border: 1px solid #a0a0a0; background: #e8e8e8; display: flex; align-items: center; justify-content: center; }
.vscroll .arrow + b { margin-top: 3px; }
.vscroll b svg { width: 10px; height: 10px; }
.splitter { width: 8px; height: 906px; display: flex; align-items: center; justify-content: center; border-right: 1px solid #999; border-left: 1px solid #fff; }
.splitter i { width: 2px; height: 34px; background: repeating-linear-gradient(#777 0 1px, transparent 1px 4px); }
.sidebar { width: 38px; height: 906px; display: flex; flex-direction: column; align-items: center; border-right: 1px solid #999; border-bottom: 1px solid #999; }
.deck-menu { margin: 14px 0 17px; }
.deck { width: 32px; height: 32px; margin-bottom: 3.200px; display: flex; align-items: center; justify-content: center; }
.deck svg { width: 24px; height: 24px; }
.active { border: 1px solid #aaa; border-radius: 3px; }

.status { height: 22px; display: flex; background: #f0f0f0; border-top: 1px solid #fff; padding-top: 3px; }
.status > span { height: 17px; line-height: 17px; border-left: 1px solid #a0a0a0; padding-left: 4px; display: flex; align-items: center; }
.status .c-page { width: 366px; border-left: 0; padding-left: 10px; }
.c-style { width: 347px; }
.status .c-lang { width: 380px; padding: 0; justify-content: center; padding-right: 4px; }
.c-ins { width: 45px; } .c-std { width: 34px; } .c-a { width: 16px; } .c-b { width: 29px; } .c-rest { width: 438px; }
.status .c-views { width: 76px; padding: 0 6px 0 7px; gap: 5px; }
.status .c-zoom { width: 144px; padding: 0; }
.c-zoom svg { overflow: visible; }
.status .c-pct { padding-left: 7px; }

.taskbar { height: 40px; display: flex; padding-left: .5px; background: linear-gradient(90deg, #22201a, #27241d 22%, #1e1b17 28%, #0d0c0c 34%, #0d0c0c 45%, #1b1214 52%, #191112 62%, #13120c 66%, #1d150c 75%, #190f0f 80%, #12120f 87%, #111 94%, #23201c); }
.taskbar > b { width: 49px; height: 40px; display: flex; align-items: center; justify-content: center; }
.taskbar > b svg { width: 24px; height: 24px; }
.taskbar > .run { width: 40px; margin: 0 4.500px; box-shadow: inset 0 -2px 0 #b2aaa7; }
.taskbar > .studio { width: 48px; margin: 0 0 0 1px; background: #a0561d; box-shadow: inset 0 -2px 0 #ff7a00; }
.taskbar > .writer { width: 48px; margin: 0 0 0 1px; background: #3f3e3e; }
.rr { font: 16px "Liberation Serif", serif; fill: #d8dde0; }
.gog { font: 700 8px "DejaVu Sans", sans-serif; fill: #7a2296; }
.tray { margin-left: auto; display: flex; align-items: center; }
.tray svg { width: 24px; height: 24px; }
.clock { width: 62px; color: #fff; display: flex; flex-direction: column; align-items: center; line-height: 18px; letter-spacing: -.45px; }
.tray .note { margin: 0 17px 0 8px; }
.peek { width: 5px; height: 40px; border-left: 1px solid #555; }
```
